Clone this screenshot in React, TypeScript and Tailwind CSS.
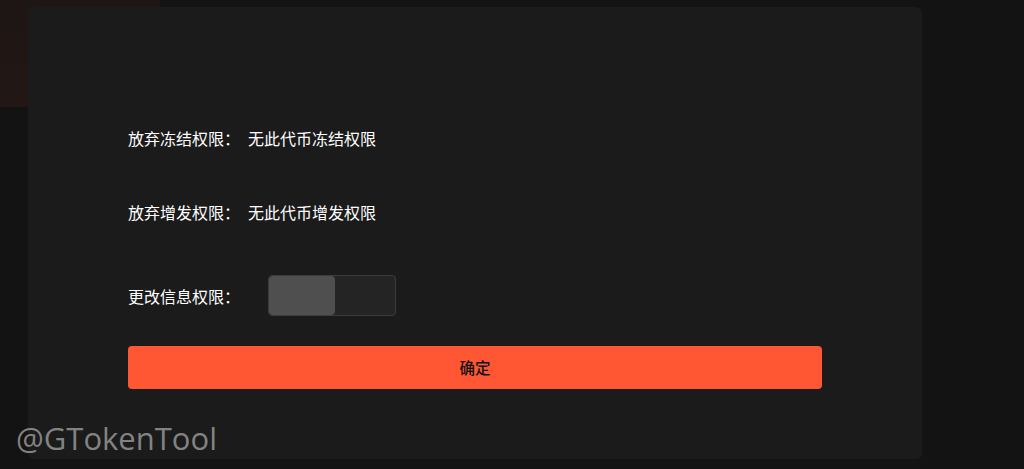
export default function App() {
  return (
    <div
      className="relative h-[469px] w-[1024px] overflow-hidden bg-[#131313]"
      style={{ fontFamily: '"Noto Sans CJK SC", "Noto Sans", sans-serif' }}
    >
      {/* backdrop glow behind the dialog */}
      <div className="absolute left-0 top-0 h-[107px] w-[160px] bg-gradient-to-b from-[#1d1614] to-[#221714]" />

      {/* Dialog */}
      <div className="relative ml-[28px] mt-[7px] h-[452px] w-[894px] rounded-md bg-[#1b1b1b] pl-[100px] pr-[100px] pt-[117px]">
        <div className="flex h-[28px] items-center text-[16px] text-white">
          <span className="w-[120px]">放弃冻结权限：</span>
          <span>无此代币冻结权限</span>
        </div>
        <div className="mt-[46px] flex h-[28px] items-center text-[16px] text-white">
          <span className="w-[120px]">放弃增发权限：</span>
          <span>无此代币增发权限</span>
        </div>
        <div className="mt-[49px] flex items-center text-[16px] text-white">
          <span className="w-[140px]">更改信息权限：</span>
          <button className="flex h-[41px] w-[128px] overflow-hidden rounded-[4px] border border-[#3c3c3c] bg-[#242424]">
            <span className="h-full w-[66px] rounded-[4px] bg-[#4f4f4f]" />
          </button>
        </div>
        <button className="mt-[30px] flex h-[43px] w-[694px] items-center justify-center rounded-[4px] bg-[#ff5733] text-[15.5px] font-medium text-[#111]">
          确定
        </button>
      </div>

      {/* watermark */}
      <div
        className="absolute left-[16px] top-[415px] text-[31px] text-[#a0a0a0]/80"
        style={{ fontFamily: '"Open Sans", "Noto Sans", sans-serif' }}
      >
        @GTokenTool
      </div>
    </div>
  );
}
